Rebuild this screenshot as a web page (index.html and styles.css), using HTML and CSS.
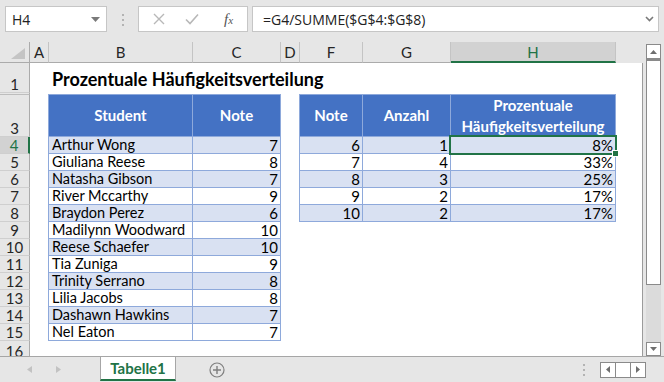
FILE: index.html
```html
<!DOCTYPE html>
<html lang="de">
<head>
  <meta charset="UTF-8">
  <meta name="viewport" content="width=device-width, initial-scale=1.0">
  <title>Prozentuale Häufigkeitsverteilung</title>
  <link rel="stylesheet" href="styles.css">
</head>
<body>
<div class="app">
  <div class="toolbar">
    <div class="namebox">
      <span>H4</span>
      <svg width="9" height="5" viewBox="0 0 9 5"><path d="M0 0h9L4.5 5z" fill="#7a7a7a"/></svg>
    </div>
    <svg class="grip" width="3" height="12" viewBox="0 0 3 12">
      <rect x="0" y="0" width="2" height="2" fill="#b3b3b3"/>
      <rect x="0" y="5" width="2" height="2" fill="#b3b3b3"/>
      <rect x="0" y="10" width="2" height="2" fill="#b3b3b3"/>
    </svg>
    <div class="fxbox">
      <svg class="fx-cancel" width="12" height="12" viewBox="0 0 12 12"><path d="M1 1l10 10M11 1L1 11" stroke="#b8b8b8" stroke-width="1.4"/></svg>
      <svg class="fx-ok" width="14" height="12" viewBox="0 0 14 12"><path d="M1 6.5l4 4L13 1.5" fill="none" stroke="#b8b8b8" stroke-width="1.6"/></svg>
      <span class="fx">f<span>x</span></span>
    </div>
    <div class="formula">
      <span>=G4/SUMME($G$4:$G$8)</span>
      <svg width="9" height="6" viewBox="0 0 9 6"><path d="M1 1l3.5 3.5L8 1" fill="none" stroke="#7a7a7a" stroke-width="1.6"/></svg>
    </div>
  </div>

  <div class="main">
    <div class="sheet">
      <div class="corner"><svg width="14" height="11" viewBox="0 0 14 11"><path d="M14 0v11H0z" fill="#c4c4c4"/></svg></div>
      <div class="colhdr">A</div>
      <div class="colhdr">B</div>
      <div class="colhdr">C</div>
      <div class="colhdr">D</div>
      <div class="colhdr">F</div>
      <div class="colhdr">G</div>
      <div class="colhdr active">H</div>
      <div class="colhdr blank"></div>

      <div class="rowhdr">1</div>
      <div class="rowhdr thin"></div>
      <div class="rowhdr">3</div>
      <div class="rowhdr active">4</div>
      <div class="rowhdr">5</div>
      <div class="rowhdr">6</div>
      <div class="rowhdr">7</div>
      <div class="rowhdr">8</div>
      <div class="rowhdr">9</div>
      <div class="rowhdr">10</div>
      <div class="rowhdr">11</div>
      <div class="rowhdr">12</div>
      <div class="rowhdr">13</div>
      <div class="rowhdr">14</div>
      <div class="rowhdr">15</div>
      <div class="rowhdr last">16</div>

      <div class="title">Prozentuale Häufigkeitsverteilung</div>

      <div class="xtable students">
        <div class="th">Student</div><div class="th">Note</div>
        <div class="td band">Arthur Wong</div><div class="td num band">7</div>
        <div class="td">Giuliana Reese</div><div class="td num">8</div>
        <div class="td band">Natasha Gibson</div><div class="td num band">7</div>
        <div class="td">River Mccarthy</div><div class="td num">9</div>
        <div class="td band">Braydon Perez</div><div class="td num band">6</div>
        <div class="td">Madilynn Woodward</div><div class="td num">10</div>
        <div class="td band">Reese Schaefer</div><div class="td num band">10</div>
        <div class="td">Tia Zuniga</div><div class="td num">9</div>
        <div class="td band">Trinity Serrano</div><div class="td num band">8</div>
        <div class="td">Lilia Jacobs</div><div class="td num">8</div>
        <div class="td band">Dashawn Hawkins</div><div class="td num band">7</div>
        <div class="td">Nel Eaton</div><div class="td num">7</div>
      </div>

      <div class="xtable freq">
        <div class="th">Note</div><div class="th">Anzahl</div><div class="th">Prozentuale Häufigkeitsverteilung</div>
        <div class="td num band">6</div><div class="td num band">1</div><div class="td num band">8%</div>
        <div class="td num">7</div><div class="td num">4</div><div class="td num">33%</div>
        <div class="td num band">8</div><div class="td num band">3</div><div class="td num band">25%</div>
        <div class="td num">9</div><div class="td num">2</div><div class="td num">17%</div>
        <div class="td num band">10</div><div class="td num band">2</div><div class="td num band">17%</div>
      </div>

      <div class="selection"></div>
      <div class="edge"></div>
    </div>

    <div class="vscroll">
      <div class="vs-btn up"><svg width="7" height="4" viewBox="0 0 7 4"><path d="M0 4h7L3.5 0z" fill="#6e6e6e"/></svg></div>
      <div class="vs-thumb"></div>
      <div class="vs-track"></div>
      <div class="vs-btn down"><svg width="7" height="4" viewBox="0 0 7 4"><path d="M0 0h7L3.5 4z" fill="#6e6e6e"/></svg></div>
    </div>
  </div>

  <div class="tabbar">
    <svg class="tab-nav" width="5" height="7" viewBox="0 0 5 7"><path d="M5 0v7L0 3.5z" fill="#c2c2c2"/></svg>
    <svg class="tab-nav next" width="5" height="7" viewBox="0 0 5 7"><path d="M0 0v7l5-3.5z" fill="#c2c2c2"/></svg>
    <div class="tab">Tabelle1</div>
    <svg class="addsheet" width="16" height="16" viewBox="0 0 16 16">
      <circle cx="8" cy="8" r="7" fill="none" stroke="#7f7f7f" stroke-width="1.2"/>
      <path d="M8 4v8M4 8h8" stroke="#7f7f7f" stroke-width="1.4"/>
    </svg>
    <svg class="hgrip" width="2" height="12" viewBox="0 0 2 12">
      <rect x="0" y="0" width="2" height="2" fill="#b3b3b3"/>
      <rect x="0" y="5" width="2" height="2" fill="#b3b3b3"/>
      <rect x="0" y="10" width="2" height="2" fill="#b3b3b3"/>
    </svg>
    <div class="hscroll">
      <div class="hs-btn"><svg width="4" height="7" viewBox="0 0 4 7"><path d="M4 0v7L0 3.5z" fill="#6e6e6e"/></svg></div>
      <div class="hs-btn"></div>
      <div class="hs-btn"><svg width="4" height="7" viewBox="0 0 4 7"><path d="M0 0v7l4-3.5z" fill="#6e6e6e"/></svg></div>
    </div>
  </div>
</div>
</body>
</html>
```

FILE: styles.css
```css
body { margin: 0; font-family: Lato, "Liberation Sans", sans-serif; }
.app { width: 664px; height: 382px; background: #e6e6e6; overflow: hidden; }

/* formula bar */
.toolbar { height: 42px; display: flex; align-items: flex-start; padding-top: 6px; box-sizing: border-box; font-family: "Open Sans", "Liberation Sans", sans-serif; font-size: 14px; color: #222; }
.namebox { margin-left: 5px; width: 102px; height: 26px; box-sizing: border-box; background: #fff; border: 1px solid #c6c6c6; display: flex; align-items: center; justify-content: space-between; padding: 0 6px 0 6px; }
.grip { margin: 8px 0 0 15px; }
.fxbox { margin-left: 13px; width: 110px; height: 26px; box-sizing: border-box; background: #fff; border: 1px solid #c6c6c6; display: flex; align-items: center; padding-left: 14px; }
.fx-ok { margin-left: 20px; }
.fx { margin-left: 25px; font-family: "Liberation Serif", serif; font-style: italic; font-size: 15px; color: #555; }
.fx span { font-size: 11px; }
.formula { margin-left: 4px; width: 407px; height: 26px; box-sizing: border-box; background: #fff; border: 1px solid #c6c6c6; display: flex; align-items: center; justify-content: space-between; padding: 0 4px 0 10px; }

/* sheet grid */
.main { display: flex; height: 314px; }
.sheet { width: 643px; background: #fff; display: grid; grid-template-columns: 30px 19px 144px 88px 19px 63px 88px 165px 27px; grid-template-rows: 21px 30px 2px 42px repeat(12, 17px) 15px; font-size: 14.5px; color: #000; }
.corner { background: #e6e6e6; border-right: 1px solid #ababab; border-bottom: 1px solid #ababab; display: flex; align-items: flex-end; justify-content: flex-end; padding: 0 4px 3px 0; }
.colhdr { background: #e6e6e6; border-right: 1px solid #c4c4c4; border-bottom: 1px solid #ababab; display: flex; align-items: center; justify-content: center; color: #262626; font-size: 15px; }
.colhdr.active { background: #d2d2d2; color: #217346; border-bottom: 2px solid #217346; }
.colhdr.blank { border-right: none; border-bottom: none; }
.rowhdr { grid-column: 1; background: #e6e6e6; border-right: 1px solid #ababab; border-bottom: 1px solid #cfcfcf; display: flex; align-items: flex-end; justify-content: center; line-height: 16px; font-size: 15px; color: #262626; overflow: hidden; }
.rowhdr.thin { border-bottom-color: #bdbdbd; }
.rowhdr.active { background: #d2d2d2; color: #217346; border-right: 2px solid #217346; }
.rowhdr.last { border-bottom: none; align-items: flex-start; padding-top: 2px; }

.title { grid-column: 3 / 9; grid-row: 2; align-self: end; padding: 0 0 3px 3px; font-weight: bold; font-size: 18px; }

/* tables */
.xtable { display: grid; margin: -1px 0 0 -1px; border-left: 1px solid #8ea9db; border-top: 1px solid #8ea9db; }
.students { grid-column: 3 / 5; grid-row: 4 / 17; grid-template-columns: 144px 88px; grid-template-rows: 42px repeat(12, 17px); }
.freq { grid-column: 6 / 9; grid-row: 4 / 10; grid-template-columns: 63px 88px 165px; grid-template-rows: 42px repeat(5, 17px); }
.th { background: #4472c4; color: #fff; font-weight: bold; font-size: 15px; text-align: center; display: flex; align-items: center; justify-content: center; line-height: 21px; border-right: 1px solid #8ea9db; border-bottom: 1px solid #8ea9db; padding: 0 4px; }
.td { line-height: 16px; padding: 0 3px; white-space: nowrap; border-right: 1px solid #8ea9db; border-bottom: 1px solid #8ea9db; }
.td.num { text-align: right; padding-right: 2px; font-size: 15px; }
.band { background: #d9e1f2; }

.selection { grid-column: 8; grid-row: 5; margin: -2px -1px -1px -2px; border: 2px solid #217346; position: relative; z-index: 2; }
.selection::after { content: ""; position: absolute; right: -4px; bottom: -4px; width: 5px; height: 5px; background: #217346; border: 1px solid #fff; }
.edge { grid-column: 9; grid-row: 2 / -1; background: #fff; border-right: 1px solid #9b9b9b; }

/* vertical scrollbar */
.vscroll { width: 21px; box-sizing: border-box; padding: 2px 0 0 3px; display: flex; flex-direction: column; }
.vs-btn { width: 15px; height: 15px; box-sizing: border-box; border: 1px solid #8a8a8a; background: #fff; display: flex; align-items: center; justify-content: center; }
.vs-btn.down { height: 14px; }
.vs-thumb { width: 15px; height: 226px; box-sizing: border-box; border: 1px solid #8a8a8a; border-top-width: 2px; background: #fff; }
.vs-track { flex: 1; width: 15px; background: #dbdbdb; }

/* sheet tabs */
.tabbar { height: 26px; box-sizing: border-box; border-top: 1px solid #a6a6a6; display: flex; align-items: center; }
.tab-nav { margin-left: 27px; }
.tab-nav.next { margin-left: 24px; }
.tab { margin-left: 39px; align-self: stretch; width: 76px; box-sizing: border-box; background: #fff; border-left: 1px solid #a6a6a6; border-right: 1px solid #a6a6a6; border-bottom: 2px solid #217346; margin-bottom: 1px; display: flex; align-items: center; justify-content: center; color: #217346; font-weight: bold; font-size: 15px; }
.addsheet { margin-left: 33px; }
.hgrip { margin-left: 358px; }
.hscroll { margin-left: 15px; display: flex; border: 1px solid #8a8a8a; }
.hs-btn { width: 14px; height: 14px; background: #fff; display: flex; align-items: center; justify-content: center; border-left: 1px solid #8a8a8a; }
.hs-btn:first-child { border-left: none; }
```
